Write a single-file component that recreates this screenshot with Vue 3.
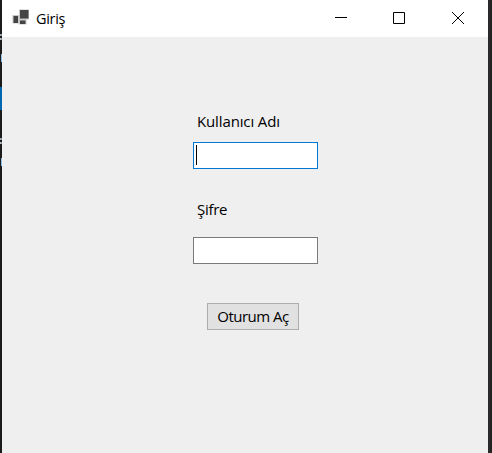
<script setup>
import { ref } from 'vue'

const username = ref('')
const password = ref('')
</script>

<template>
  <div class="desktop">
    <div class="backdrop" aria-hidden="true">
      <i class="space-a"></i>
      <i class="dot warm"></i>
      <i class="dot pale"></i>
      <i class="space-b"></i>
      <i class="stem"></i>
      <i class="space-c"></i>
      <i class="selection"></i>
      <i class="space-d"></i>
      <i class="dot warm"></i>
      <i class="dot pale"></i>
      <i class="space-e"></i>
      <i class="stem"></i>
    </div>
    <main class="window">
      <header class="titlebar">
        <svg class="app-icon" width="18" height="16" viewBox="0 0 18 16">
          <path fill="#c8c8c8" d="M7 .5h10v10H7zM.5 6H7v8.500H.5zM7 10.500h7.500V15.500H7z" />
          <path fill="#444" d="M8 1h8.500v8.500H8zM1.500 7h4.500v7H1.500zM8 11.500h5.500v3.500H8z" />
        </svg>
        <span class="title">Giriş</span>
        <nav class="controls">
          <svg width="12" height="12" viewBox="0 0 12 12"><path d="M0 5.5h12" /></svg>
          <svg width="12" height="12" viewBox="0 0 12 12"><path d="M.5.5h11v11H.5z" /></svg>
          <svg class="close" width="12" height="12" viewBox="0 0 12 12"><path d="M0 0l12 12M12 0L0 12" /></svg>
        </nav>
      </header>
      <form class="form" @submit.prevent>
        <label class="label user-label" for="user">Kullanıcı Adı</label>
        <div class="field focused">
          <span class="caret"></span>
          <input id="user" v-model="username" type="text" />
        </div>
        <label class="label pass-label" for="pass">Şifre</label>
        <div class="field">
          <input id="pass" v-model="password" type="password" />
        </div>
        <button class="submit" type="submit"><span>Oturum Aç</span></button>
      </form>
    </main>
  </div>
</template>

<style>
body {
  margin: 0;
  overflow: hidden;
}
</style>

<style scoped>
* {
  box-sizing: border-box;
}
.desktop {
  display: flex;
  width: 492px;
  height: 453px;
  background: linear-gradient(90deg, #1b1b1b 488px, #343434 489px, #232323 490px);
  font-family: "Open Sans", "Noto Sans", sans-serif;
  font-size: 15px;
  line-height: 20px;
  color: #000;
}
.backdrop {
  display: flex;
  flex-direction: column;
  width: 2px;
}
.backdrop i {
  display: block;
  flex: none;
}
.space-a { height: 34px; }
.space-b { height: 12px; }
.space-c { height: 25px; }
.space-d { height: 28px; }
.space-e { height: 12px; }
.dot {
  height: 2px;
  margin-bottom: 2px;
}
.warm { background: linear-gradient(90deg, #c8aa85, #5e91c4); }
.pale { background: linear-gradient(90deg, #d6d6c9, #637b99); }
.stem {
  height: 8px;
  width: 1px;
  margin-left: 1px;
  background: #8fc1ee;
}
.selection {
  height: 23px;
  background: #0067b0;
}
.window {
  width: 486px;
  height: 453px;
  background: #efefef;
}
.titlebar {
  display: flex;
  align-items: flex-start;
  height: 37px;
  padding-left: 10px;
  background: #fff;
}
.app-icon {
  margin-top: 9px;
}
.title {
  margin: 9px 0 0 6px;
  font-size: 14.5px;
  letter-spacing: -0.3px;
}
.controls {
  display: flex;
  gap: 46px;
  margin: 12px 24px 0 auto;
}
.controls svg {
  fill: none;
  stroke: #000;
  stroke-width: 1;
}
.controls .close {
  margin-left: 1px;
}
.form {
  display: flex;
  flex-direction: column;
  align-items: flex-start;
  padding: 74px 0 0 191px;
}
.label {
  height: 20px;
  margin-left: 4px;
  letter-spacing: -0.3px;
  white-space: nowrap;
}
.user-label {
  margin-bottom: 11px;
  letter-spacing: -0.13px;
}
.pass-label { margin: 30px 0 18px 4px; }
.field {
  display: flex;
  width: 125px;
  height: 27px;
  padding: 2px;
  background: #fff;
  border: 1px solid #7a7a7a;
}
.focused {
  border-color: #0078d7;
}
.caret {
  flex: none;
  width: 1px;
  height: 20px;
  background: #000;
}
.field input {
  flex: 1;
  min-width: 0;
  padding: 0;
  border: 0;
  outline: 0;
  background: transparent;
  font: inherit;
}
.submit {
  display: flex;
  align-items: center;
  justify-content: center;
  width: 92px;
  height: 27px;
  margin: 39px 0 0 14px;
  padding: 0 0 2px;
  background: #e1e1e1;
  border: 1px solid #adadad;
  color: #000;
  font: inherit;
  letter-spacing: -0.5px;
  white-space: nowrap;
}
</style>
